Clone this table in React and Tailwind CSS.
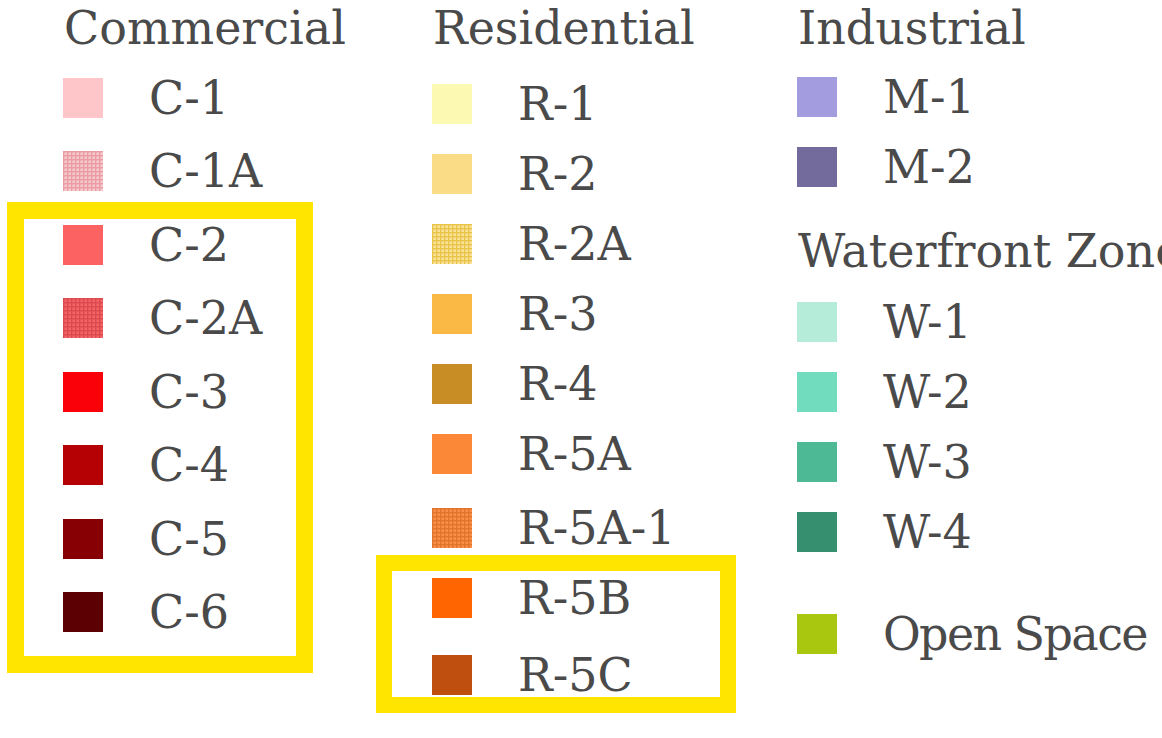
import React from "react";

const Swatch = ({ color, pattern }) => {
  if (!pattern) {
    return <div className="w-[40px] h-[40px] shrink-0" style={{ backgroundColor: color }} />;
  }
  const id = "p" + color.replace("#", "");
  return (
    <svg width="40" height="40" viewBox="0 0 40 40" className="shrink-0 block">
      <defs>
        <pattern id={id} width="4" height="4" patternUnits="userSpaceOnUse">
          <rect width="4" height="4" fill={pattern.base} />
          <rect x="0" y="0" width="4" height="1.4" fill={pattern.line} />
          <rect x="0" y="0" width="1.4" height="4" fill={pattern.line} />
        </pattern>
      </defs>
      <rect width="40" height="40" fill={`url(#${id})`} />
    </svg>
  );
};

const Row = ({ item, h }) => (
  <div className={`flex items-center gap-[46px] ${h} ${item.mt || ""}`}>
    <Swatch color={item.color} pattern={item.pattern} />
    <span className={`leading-[56px] whitespace-nowrap ${item.tight || ""}`}>{item.label}</span>
  </div>
);

const commercial = [
  { label: "C-1", color: "#ffc6ca" },
  { label: "C-1A", color: "#f4b0b6", pattern: { base: "#f7c9cd", line: "#e99ca3" } },
  { label: "C-2", color: "#fd6262" },
  { label: "C-2A", color: "#ec5a5c", pattern: { base: "#f26466", line: "#dc4a50" } },
  { label: "C-3", color: "#fa0008" },
  { label: "C-4", color: "#b50004" },
  { label: "C-5", color: "#870003" },
  { label: "C-6", color: "#5c0004" },
];

const residential = [
  { label: "R-1", color: "#fcfab2" },
  { label: "R-2", color: "#fbdc86" },
  { label: "R-2A", color: "#f3d35e", pattern: { base: "#fae39a", line: "#e8c44a" } },
  { label: "R-3", color: "#fab945" },
  { label: "R-4", color: "#c98d25" },
  { label: "R-5A", color: "#fb8836" },
  { label: "R-5A-1", color: "#f47b2e", pattern: { base: "#f8904a", line: "#e3722a" }, mt: "mt-[4px]" },
  { label: "R-5B", color: "#ff6500" },
  { label: "R-5C", color: "#bf4f0e", mt: "mt-[7px]" },
];

const industrial = [
  { label: "M-1", color: "#a39ddf" },
  { label: "M-2", color: "#736b9c" },
];

const waterfront = [
  { label: "W-1", color: "#b4ecd9" },
  { label: "W-2", color: "#72dcbf" },
  { label: "W-3", color: "#4dba95" },
  { label: "W-4", color: "#36906f" },
];

export default function App() {
  return (
    <div className="relative w-[1162px] h-[738px] overflow-hidden bg-white text-[#4a4a4a] text-[46px] font-['DejaVu_Serif',serif]">
      <div className="flex pl-[63px]">
        <div className="flex flex-col w-[369px] shrink-0">
          <div className="h-[56px] leading-[56px] pl-[1px] whitespace-nowrap">Commercial</div>
          <div className="flex flex-col mt-[5px]">
            {commercial.map((it) => (
              <Row key={it.label} item={it} h="h-[73.5px]" />
            ))}
          </div>
        </div>
        <div className="flex flex-col w-[365px] shrink-0">
          <div className="h-[56px] leading-[56px] pl-[1px] whitespace-nowrap">Residential</div>
          <div className="flex flex-col mt-[13px]">
            {residential.map((it) => (
              <Row key={it.label} item={it} h="h-[70px]" />
            ))}
          </div>
        </div>
        <div className="flex flex-col shrink-0">
          <div className="h-[56px] leading-[56px] pl-[1px] whitespace-nowrap">Industrial</div>
          <div className="flex flex-col mt-[6px]">
            {industrial.map((it) => (
              <Row key={it.label} item={it} h="h-[70px]" />
            ))}
          </div>
          <div className="h-[56px] leading-[56px] mt-[21px] pl-[1px] whitespace-nowrap">Waterfront Zone</div>
          <div className="flex flex-col mt-[8px]">
            {waterfront.map((it) => (
              <Row key={it.label} item={it} h="h-[70px]" />
            ))}
          </div>
          <div className="mt-[32px]">
            <Row item={{ label: "Open Space", color: "#a9c70f", tight: "tracking-[-0.035em]" }} h="h-[70px]" />
          </div>
        </div>
      </div>
      <div className="absolute left-[7px] top-[202px] w-[306px] h-[471px] border-[17px] border-[#ffe500]" />
      <div className="absolute left-[376px] top-[555px] w-[360px] h-[158px] border-[16px] border-[#ffe500]" />
    </div>
  );
}
